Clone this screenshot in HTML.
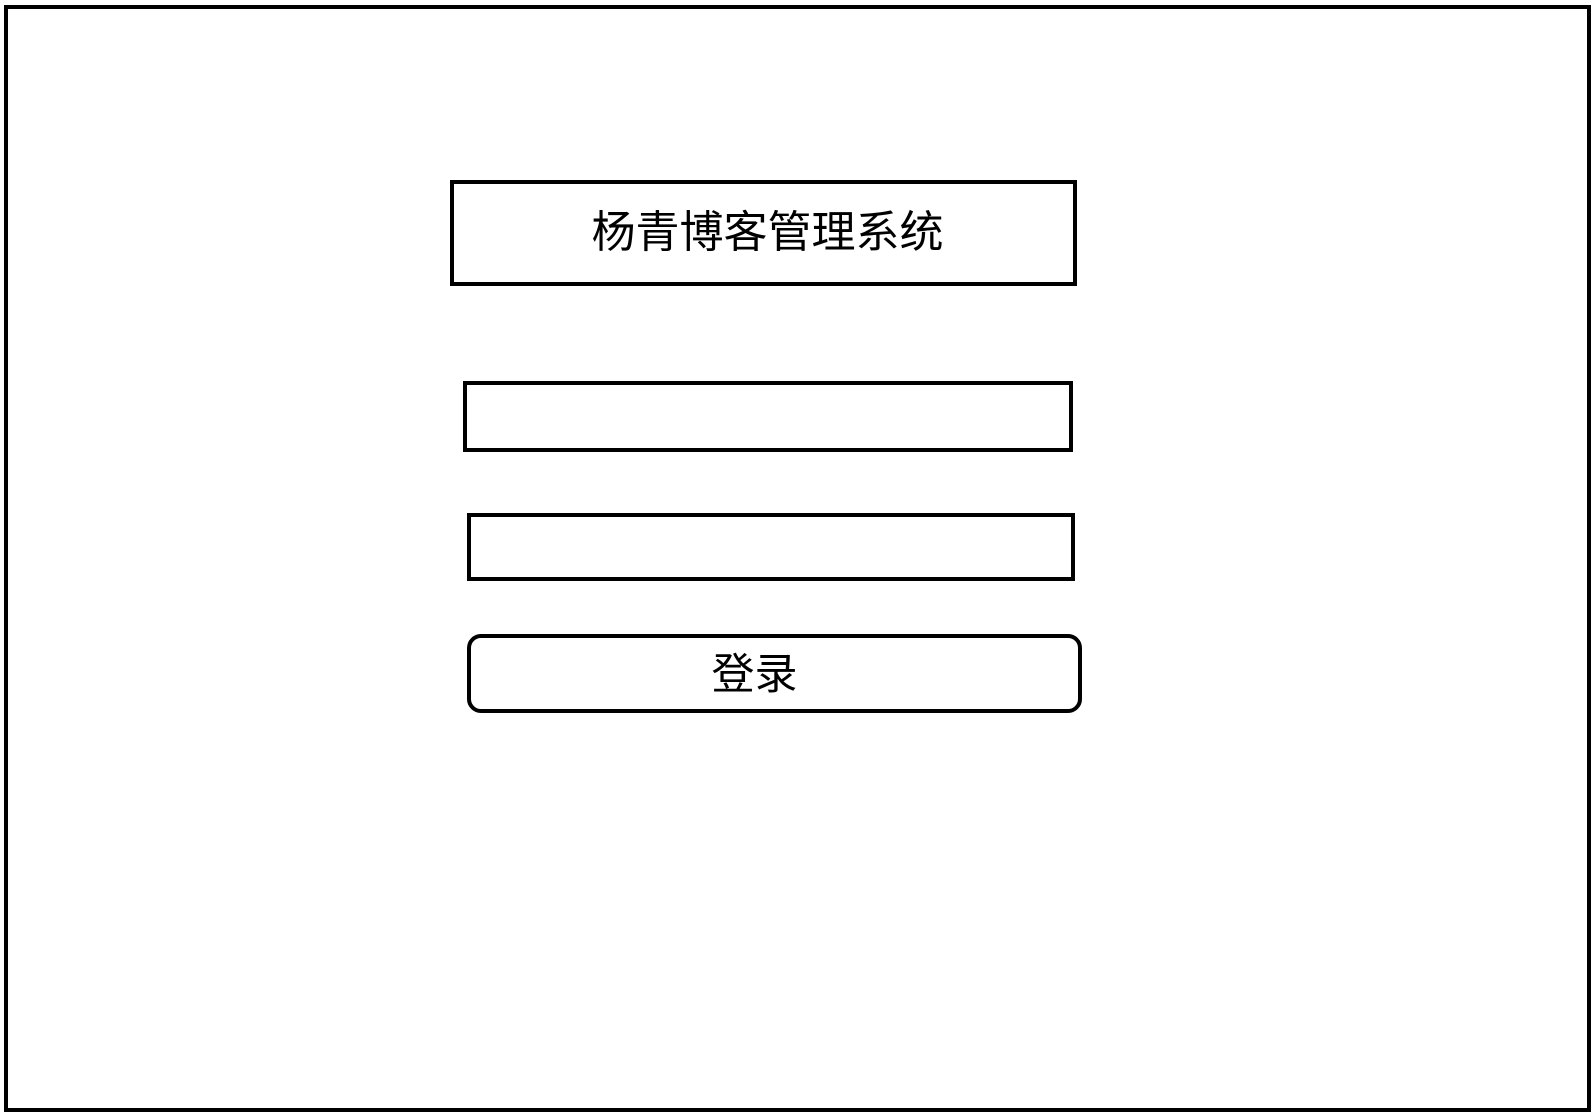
<!DOCTYPE html>
<html><head><meta charset="utf-8"><style>
html,body{margin:0;padding:0;background:#fff;width:1596px;height:1118px;overflow:hidden}
div{position:absolute;box-sizing:border-box;border:4px solid #000;background:#fff}
.t{font-family:"Liberation Sans","Noto Sans CJK SC",sans-serif;color:#000;display:flex;align-items:center;justify-content:center}
</style></head><body>
<div style="left:4px;top:5px;width:1587px;height:1107px"></div>
<div class="t" style="left:450px;top:180px;width:627px;height:106px;font-size:44px;padding-left:8px;padding-bottom:10px">杨青博客管理系统</div>
<div style="left:463px;top:381px;width:610px;height:71px"></div>
<div style="left:467px;top:513px;width:608px;height:68px"></div>
<div class="t" style="left:467px;top:634px;width:615px;height:79px;border-radius:14px;font-size:43px;padding-right:40px;padding-bottom:6px">登录</div>
</body></html>
